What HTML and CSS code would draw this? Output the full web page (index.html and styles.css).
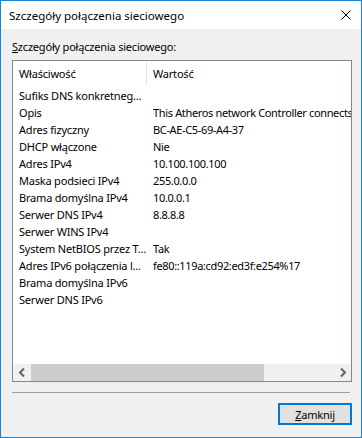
FILE: index.html
```html
<!DOCTYPE html>
<html lang="pl">
<head>
    <meta charset="UTF-8">
    <title>Szczegóły połączenia sieciowego</title>
    <link rel="stylesheet" href="styles.css">
</head>
<body>
    <div class="window">
        <div class="titlebar">
            <span class="title">Szczegóły połączenia sieciowego</span>
            <svg class="close" width="10" height="10" viewBox="0 0 10 10">
                <path d="M0.5 0.5 L9.5 9.5 M9.5 0.5 L0.5 9.5" stroke="#000" stroke-width="1" fill="none"/>
            </svg>
        </div>
        <div class="content">
            <div class="label"><u>S</u>zczegóły połączenia sieciowego:</div>
            <div class="listbox">
                <div class="list-body">
                    <div class="list-header">
                        <div class="col-prop">Właściwość</div>
                        <div class="col-val">Wartość</div>
                    </div>
                    <div class="rows">
                        <div class="row"><div class="col-prop">Sufiks DNS konkretneg...</div><div class="col-val"></div></div>
                        <div class="row"><div class="col-prop">Opis</div><div class="col-val">This Atheros network Controller connects</div></div>
                        <div class="row"><div class="col-prop">Adres fizyczny</div><div class="col-val">BC-AE-C5-69-A4-37</div></div>
                        <div class="row"><div class="col-prop">DHCP włączone</div><div class="col-val">Nie</div></div>
                        <div class="row"><div class="col-prop">Adres IPv4</div><div class="col-val">10.100.100.100</div></div>
                        <div class="row"><div class="col-prop">Maska podsieci IPv4</div><div class="col-val">255.0.0.0</div></div>
                        <div class="row"><div class="col-prop">Brama domyślna IPv4</div><div class="col-val">10.0.0.1</div></div>
                        <div class="row"><div class="col-prop">Serwer DNS IPv4</div><div class="col-val">8.8.8.8</div></div>
                        <div class="row"><div class="col-prop">Serwer WINS IPv4</div><div class="col-val"></div></div>
                        <div class="row"><div class="col-prop">System NetBIOS przez T...</div><div class="col-val">Tak</div></div>
                        <div class="row"><div class="col-prop">Adres IPv6 połączenia l...</div><div class="col-val">fe80::119a:cd92:ed3f:e254%17</div></div>
                        <div class="row"><div class="col-prop">Brama domyślna IPv6</div><div class="col-val"></div></div>
                        <div class="row"><div class="col-prop">Serwer DNS IPv6</div><div class="col-val"></div></div>
                    </div>
                </div>
                <div class="hscroll">
                    <div class="arrow">
                        <svg width="8" height="9" viewBox="0 0 8 9"><path d="M6 0.5 L2 4.5 L6 8.5" stroke="#606060" stroke-width="2" fill="none"/></svg>
                    </div>
                    <div class="track">
                        <div class="thumb"></div>
                    </div>
                    <div class="arrow">
                        <svg width="8" height="9" viewBox="0 0 8 9"><path d="M2 0.5 L6 4.5 L2 8.5" stroke="#606060" stroke-width="2" fill="none"/></svg>
                    </div>
                </div>
            </div>
            <div class="separator"></div>
            <div class="buttons">
                <button class="btn"><u>Z</u>amknij</button>
            </div>
        </div>
    </div>
</body>
</html>
```

FILE: styles.css
```css
:root {
    --accent: #1883d7;
    --face: #f0f0f0;
    --list-border: #828790;
    --font: "Noto Sans", "Liberation Sans", sans-serif;
}

* {
    box-sizing: border-box;
    margin: 0;
    padding: 0;
}

body {
    font-family: var(--font);
    font-size: 11px;
    letter-spacing: -0.2px;
    color: #000;
    background: #fff;
}

.window {
    width: 362px;
    height: 438px;
    border: 1px solid var(--accent);
    display: flex;
    flex-direction: column;
    background: var(--face);
}

.titlebar {
    height: 30px;
    background: #fff;
    display: flex;
    align-items: center;
    justify-content: space-between;
    padding: 0 10px 0 8px;
}

.title {
    font-size: 11.5px;
    letter-spacing: 0;
}

.close {
    display: block;
}

.content {
    flex: 1;
    display: flex;
    flex-direction: column;
    padding: 10px 9px 12px 11px;
}

.label {
    height: 21px;
    line-height: 15px;
}

.listbox {
    height: 322px;
    border: 1px solid var(--list-border);
    background: #fff;
    display: flex;
    flex-direction: column;
}

.list-body {
    flex: 1;
    overflow: hidden;
}

.list-header {
    display: flex;
    height: 24px;
    align-items: center;
    margin-bottom: 2px;
}

.list-header .col-prop {
    border-right: 1px solid #e5e5e5;
    height: 23px;
    line-height: 23px;
}

.row {
    display: flex;
    height: 17px;
    line-height: 17px;
}

.col-prop {
    width: 134px;
    flex-shrink: 0;
    padding-left: 6px;
    white-space: nowrap;
    overflow: hidden;
}

.col-val {
    flex: 1;
    padding-left: 6px;
    white-space: nowrap;
    overflow: hidden;
}

.row .col-val {
    letter-spacing: -0.35px;
}

.hscroll {
    height: 17px;
    display: flex;
    background: var(--face);
}

.arrow {
    width: 17px;
    display: flex;
    align-items: center;
    justify-content: center;
}

.arrow svg {
    display: block;
}

.track {
    flex: 1;
    padding-left: 1px;
}

.thumb {
    width: 233px;
    height: 100%;
    background: #cdcdcd;
}

.separator {
    margin-top: 10px;
    height: 1px;
    margin-right: 2px;
    background: #a0a0a0;
}

.buttons {
    display: flex;
    justify-content: flex-end;
    margin-top: 10px;
}

.btn {
    width: 74px;
    height: 22px;
    font-family: var(--font);
    font-size: 11px;
    letter-spacing: -0.2px;
    color: #000;
    background: #e1e1e1;
    border: 2px solid #0078d7;
}
```
